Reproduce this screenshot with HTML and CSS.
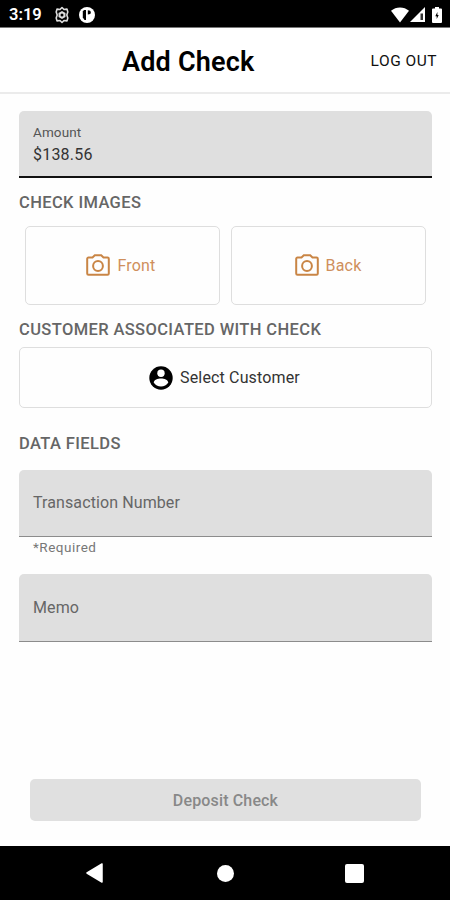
FILE: index.html
```html
<!DOCTYPE html>
<html lang="en">
<head>
    <meta charset="utf-8">
    <meta name="viewport" content="width=device-width, initial-scale=1">
    <title>Add Check</title>
    <link rel="stylesheet" href="styles.css">
</head>
<body>
    <div class="status-bar">
        <span class="time">3:19</span>
        <svg class="status-gear" width="16" height="18" viewBox="0 0 16 18">
            <path d="M8 1.500l2 2 3-.4.8 2.900L12.800 9l1 3-.8 2.900-3-.4-2 2-2-2-3 .4L2.200 12l1-3-1-3L3 3.100l3 .4z" fill="none" stroke="#ddd" stroke-width="1.600" stroke-linejoin="round"/>
            <path d="M8 5l3.500 2v4L8 13l-3.500-2V7z" fill="#ddd"/>
            <circle cx="8" cy="9" r="1.500" fill="#000"/>
        </svg>
        <svg class="status-app" width="16" height="16" viewBox="0 0 16 16">
            <circle cx="8" cy="8" r="8" fill="#fff"/>
            <path d="M3.800 4.500L5 3h2v10H5.500L3.800 10.500z" fill="#000"/>
            <path d="M8.800 3.300c2 0 3 .8 3 2.200s-1 1.900-3 1.900z" fill="#000"/>
        </svg>
        <div class="status-icons">
            <svg width="18" height="16" viewBox="0 0 18 16">
                <path d="M0 3.800C5-.7 13-.7 18 3.800L9 15.500z" fill="#fff"/>
            </svg>
            <svg width="15" height="15" viewBox="0 0 15 15">
                <path d="M0 15L15 0v15z" fill="#fff"/>
                <path d="M10.500 6.500h2.500V13h-2.500z" fill="#333"/>
            </svg>
            <svg class="battery" width="10" height="16" viewBox="0 0 10 16">
                <path d="M3 0h4v1.500h2a1 1 0 0 1 1 1V15a1 1 0 0 1-1 1H1a1 1 0 0 1-1-1V2.500a1 1 0 0 1 1-1h2z" fill="#fff"/>
                <path d="M5.400 5L3.300 9.300h1.400v2.700l2-4H5.400z" fill="#000"/>
            </svg>
        </div>
    </div>

    <header>
        <h1>Add Check</h1>
        <a class="logout">LOG OUT</a>
    </header>

    <main>
        <div class="field active">
            <span class="field-label">Amount</span>
            <span class="field-value">$138.56</span>
        </div>

        <h2 class="images-title">CHECK IMAGES</h2>
        <div class="images">
            <div class="image-box">
                <svg width="24" height="22" viewBox="0 0 24 22">
                    <path d="M2.500 3.500H6.500L8.800 1.200h6.400l2.300 2.300h4a1.300 1.300 0 0 1 1.300 1.300v14.700a1.300 1.300 0 0 1-1.300 1.300h-19a1.300 1.300 0 0 1-1.300-1.300V4.800a1.300 1.300 0 0 1 1.300-1.300z"/>
                    <circle cx="12" cy="12" r="4.900"/>
                </svg>
                <span>Front</span>
            </div>
            <div class="image-box back">
                <svg width="24" height="22" viewBox="0 0 24 22">
                    <path d="M2.500 3.500H6.500L8.800 1.200h6.400l2.300 2.300h4a1.300 1.300 0 0 1 1.300 1.300v14.700a1.300 1.300 0 0 1-1.300 1.300h-19a1.300 1.300 0 0 1-1.300-1.300V4.800a1.300 1.300 0 0 1 1.300-1.300z"/>
                    <circle cx="12" cy="12" r="4.900"/>
                </svg>
                <span>Back</span>
            </div>
        </div>

        <h2 class="customer-title">CUSTOMER ASSOCIATED WITH CHECK</h2>
        <div class="customer">
            <svg width="24" height="24" viewBox="0 0 24 24">
                <circle cx="12" cy="12" r="11.700" fill="#000"/>
                <circle cx="12" cy="7.200" r="3.700" fill="#fff"/>
                <path d="M4.700 16.500c.3-2.700 4-4.100 7.300-4.100s7 1.400 7.300 4.100c-1.600 2.500-4.300 4-7.300 4s-5.700-1.500-7.300-4z" fill="#fff"/>
            </svg>
            <span>Select Customer</span>
        </div>

        <h2 class="data-title">DATA FIELDS</h2>
        <div class="field">
            <span class="placeholder">Transaction Number</span>
        </div>
        <p class="required">*Required</p>
        <div class="field memo">
            <span class="placeholder">Memo</span>
        </div>

        <button class="deposit" disabled>Deposit Check</button>
    </main>

    <nav>
        <svg width="17" height="20" viewBox="0 0 17 20">
            <path d="M16 1v18L1 10z" fill="#fff" stroke="#fff" stroke-width="1.500" stroke-linejoin="round"/>
        </svg>
        <div class="home"></div>
        <div class="recent"></div>
    </nav>
</body>
</html>
```

FILE: styles.css
```css
* {
    box-sizing: border-box;
}
body {
    margin: 0;
    height: 900px;
    display: flex;
    flex-direction: column;
    font-family: Roboto, sans-serif;
    background-color: #fefefe;
    color: #333;
    overflow: hidden;
}
svg {
    display: block;
    flex: none;
}

.status-bar {
    height: 28px;
    background-color: #000;
    border-bottom: 1px solid #777;
    display: flex;
    align-items: center;
    padding: 2px 8px 0 9px;
}
.time {
    width: 45px;
    font-size: 16.500px;
    font-weight: 600;
    color: #fff;
}
.status-app {
    margin-left: 9px;
}
.status-icons {
    margin-left: auto;
    display: flex;
    align-items: center;
    gap: 1px;
}
.battery {
    margin-left: 6px;
}

header {
    height: 66px;
    display: flex;
    align-items: center;
    justify-content: space-between;
    padding: 2px 13px 0 122px;
    background-color: #fff;
    border-bottom: 2px solid #ebebeb;
}
h1 {
    margin: 2px 0 0;
    font-size: 27px;
    line-height: 32px;
    font-weight: 600;
    letter-spacing: 0.200px;
    color: #000;
}
.logout {
    font-size: 15.500px;
    letter-spacing: 0.500px;
    color: #111;
}

main {
    flex: 1;
    display: flex;
    flex-direction: column;
    padding: 17px 18px 0 19px;
}
.field {
    height: 67px;
    display: flex;
    flex-direction: column;
    justify-content: center;
    padding: 0 14px 1px;
    background-color: #dfdfdf;
    border-bottom: 1px solid #8c8c8c;
    border-radius: 5px 5px 0 0;
}
.active {
    padding: 1px 14px 0;
    border-bottom: 2px solid #111;
}
.memo {
    height: 68px;
}
.field-label {
    font-size: 13.500px;
    line-height: 20px;
    letter-spacing: 0.100px;
    color: #555;
}
.field-value {
    padding-top: 1px;
    font-size: 16px;
    line-height: 24px;
    letter-spacing: 0.200px;
    color: #333;
}
h2 {
    margin: 0;
    font-size: 16.500px;
    line-height: 20px;
    font-weight: 500;
    letter-spacing: 0.380px;
    color: #666;
}
.images-title {
    margin-top: 15px;
}
.images {
    display: grid;
    grid-template-columns: 1fr 1fr;
    gap: 11px;
    margin: 13px 6px 0 6px;
}
.image-box {
    height: 79px;
    display: flex;
    align-items: center;
    justify-content: center;
    gap: 7px;
    padding-right: 3px;
    border: 1px solid #dedede;
    border-radius: 5px;
    font-size: 16px;
    letter-spacing: 0.200px;
    color: #cf8f5c;
}
.back {
    padding-right: 1px;
}
.image-box svg {
    margin-top: -2px;
    fill: none;
    stroke: #c98545;
    stroke-width: 2;
}
.customer-title {
    margin-top: 15px;
}
.customer {
    height: 61px;
    margin-top: 7px;
    display: flex;
    align-items: center;
    justify-content: center;
    gap: 7px;
    padding-right: 2px;
    border: 1px solid #dedede;
    border-radius: 5px;
    font-size: 16px;
    letter-spacing: 0.150px;
}
.data-title {
    margin: 26px 0 16px;
}
.placeholder {
    font-size: 16px;
    letter-spacing: 0.100px;
    color: #666;
}
.required {
    margin: 0 0 17px;
    padding-left: 14px;
    font-size: 13.500px;
    line-height: 20px;
    letter-spacing: 0.500px;
    color: #777;
}
.deposit {
    height: 42px;
    margin: auto 11px 25px;
    border: 0;
    border-radius: 5px;
    background-color: #e0e0e0;
    font-family: inherit;
    font-size: 16px;
    font-weight: 500;
    letter-spacing: 0.150px;
    color: #888;
}

nav {
    height: 54px;
    display: flex;
    align-items: center;
    justify-content: space-between;
    padding: 0 86px;
    background-color: #000;
}
.home {
    width: 17px;
    height: 17px;
    margin-left: 2px;
    border-radius: 50%;
    background-color: #fff;
}
.recent {
    width: 19px;
    height: 19px;
    border-radius: 2px;
    background-color: #fff;
}
```
